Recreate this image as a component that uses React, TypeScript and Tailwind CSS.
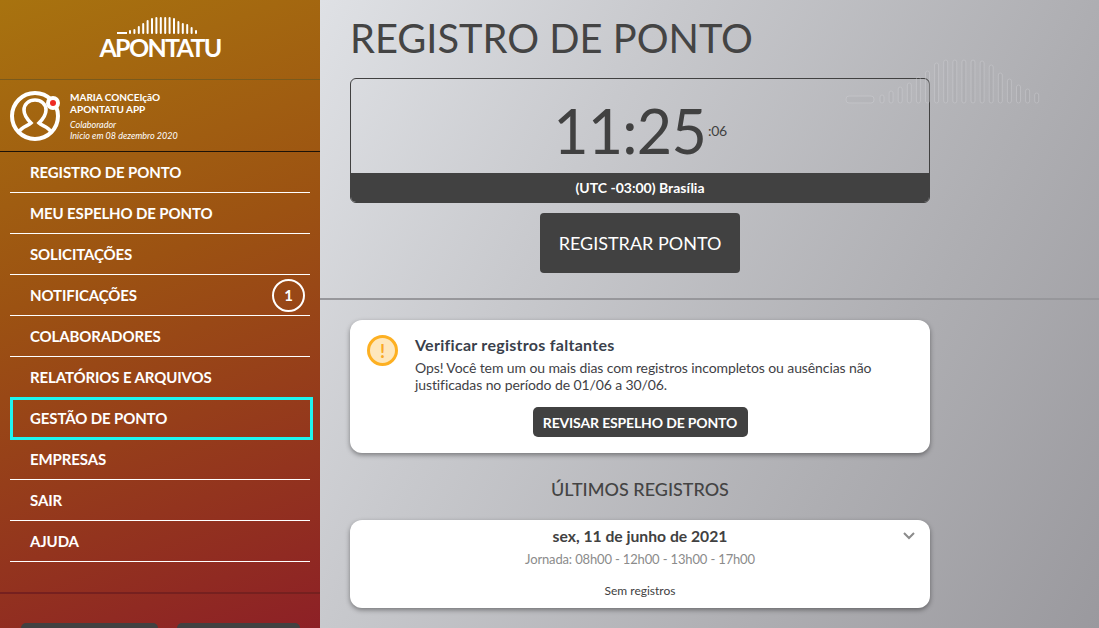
import React from "react";

const menu = [
  "REGISTRO DE PONTO",
  "MEU ESPELHO DE PONTO",
  "SOLICITAÇÕES",
  "NOTIFICAÇÕES",
  "COLABORADORES",
  "RELATÓRIOS E ARQUIVOS",
  "GESTÃO DE PONTO",
  "EMPRESAS",
  "SAIR",
  "AJUDA",
];

const logoBars = [4, 5, 8, 11, 14, 16, 17, 17, 17, 17, 16, 13, 11, 10, 7, 4];
const markBars = [8, 12, 16, 20, 26, 32, 40, 43, 43, 43, 43, 42, 38, 30, 24, 18, 14, 10];

function Logo() {
  return (
    <div className="flex flex-col items-center">
      <svg width="84" height="18" viewBox="0 0 84 18" className="-ml-[2px]">
        <rect x="0" y="15" width="10" height="2" fill="#fff" />
        {logoBars.map((h, i) => (
          <rect key={i} x={12 + i * 4.4} y={17 - h} width="2" height={h} rx="1" fill="#fff" />
        ))}
      </svg>
      <div className="mt-[1px] text-[25px] font-bold leading-[23px] tracking-[-1.7px] text-white">APONTATU</div>
    </div>
  );
}

function Avatar() {
  return (
    <svg width="50" height="50" viewBox="0 0 50 50" className="shrink-0">
      <circle cx="25" cy="25" r="23" fill="none" stroke="#fff" strokeWidth="4" />
      <path
        d="M9 41 C11 36 18 35 21 32 C17 28 14 24 14 19 C14 13 19 9 25 9 C31 9 36 13 36 19 C36 24 33 28 29 32 C32 35 39 36 41 41"
        fill="none"
        stroke="#fff"
        strokeWidth="3.6"
      />
      <circle cx="43" cy="12" r="7" fill="#fff" />
      <circle cx="43" cy="12" r="3" fill="#ee2a24" />
    </svg>
  );
}

function Watermark() {
  return (
    <svg width="200" height="46" viewBox="0 0 200 46" className="absolute left-[845px] top-[59px] opacity-35">
      <rect x="1" y="37" width="28" height="7" rx="3" fill="rgba(0,0,0,0.05)" stroke="#d6d6da" strokeWidth="1" />
      {markBars.map((h, i) => (
        <rect key={i} x={35 + i * 9.1} y={44 - h} width="4" height={h} rx="2" fill="rgba(0,0,0,0.05)" stroke="#d6d6da" strokeWidth="1" />
      ))}
    </svg>
  );
}

export default function App() {
  return (
    <div className="relative flex h-[628px] w-[1099px] overflow-hidden font-['Lato','Noto_Sans',sans-serif]">
      {/* Sidebar */}
      <aside className="flex h-full w-[320px] shrink-0 flex-col overflow-hidden bg-[linear-gradient(160deg,#a8730f_0%,#9c5212_42%,#8d2026_100%)] text-white">
        <div className="flex h-[80px] shrink-0 items-start justify-center border-b border-[#7a5a1c] pt-[17px]">
          <Logo />
        </div>
        <div className="flex h-[72px] shrink-0 items-center gap-[10px] border-b border-[#1c1208] pl-[10px]">
          <Avatar />
          <div className="pt-[1px]">
            <div className="text-[10px] font-bold leading-[12px]">MARIA CONCEIçãO</div>
            <div className="text-[10px] font-bold leading-[12px]">APONTATU APP</div>
            <div className="mt-[4px] text-[9px] italic leading-[11px]">Colaborador</div>
            <div className="text-[9px] italic leading-[11px]">Início em 08 dezembro 2020</div>
          </div>
        </div>
        <nav className="flex shrink-0 flex-col px-[10px]">
          {menu.map((item) => (
            <div
              key={item}
              className={
                item === "GESTÃO DE PONTO"
                  ? "relative -my-[1px] flex h-[43px] w-[303px] shrink-0 items-center border-[3px] border-[#1ff5ef] pl-[17px] text-[15px] font-bold tracking-[-0.12px]"
                  : "flex h-[41px] shrink-0 items-center justify-between border-b border-white pl-[20px] pr-[5px] text-[15px] font-bold tracking-[-0.12px]"
              }
            >
              <span>{item}</span>
              {item === "NOTIFICAÇÕES" && (
                <span className="flex h-[33px] w-[33px] items-center justify-center rounded-full border-2 border-white text-[15px]">1</span>
              )}
            </div>
          ))}
        </nav>
        <div className="mt-[30px] shrink-0 border-t-2 border-[#76201f] pl-[21px] pt-[29px]">
          <div className="flex gap-[19px]">
            <div className="h-[20px] w-[137px] rounded-t-[5px] bg-[#414141]" />
            <div className="h-[20px] w-[123px] rounded-t-[5px] bg-[#414141]" />
          </div>
        </div>
      </aside>

      {/* Main */}
      <main className="min-w-0 flex-1 bg-[linear-gradient(119deg,#dfe1e5_0%,#c8c9cd_31%,#aeaeb2_69%,#9a999e_100%)] text-[#414141]">
        <div className="w-[610px] pl-[30px]">
          <h1 className="pt-[13px] text-[39.8px] font-normal leading-[50px] text-[#444]">REGISTRO DE PONTO</h1>
          <div className="mt-[15px] w-[580px] overflow-hidden rounded-[6px] border border-[#414141]">
            <div className="flex h-[94px] items-center justify-center pt-[8px]">
              <span className="text-[61px] font-normal leading-none tracking-[-0.8px]">11:25</span>
              <span className="ml-[2px] text-[14px] font-normal tracking-[-0.3px]">:06</span>
            </div>
            <div className="flex h-[29px] items-center justify-center bg-[#414141] text-[14px] font-bold text-white">(UTC -03:00) Brasília</div>
          </div>
          <div className="flex w-[580px] justify-center pt-[10px]">
            <button className="h-[60px] w-[200px] rounded-[4px] bg-[#414141] text-[18px] text-white">REGISTRAR PONTO</button>
          </div>
        </div>
        <div className="mt-[25px] h-[2px] bg-[#97979b]" />
        <div className="pl-[30px]">
          <section className="mt-[20px] h-[133px] w-[580px] rounded-[12px] bg-white px-[17px] pt-[15px] shadow-[0_2px_5px_rgba(0,0,0,0.4)]">
            <div className="flex gap-[17px]">
              <div className="flex h-[31px] w-[31px] shrink-0 items-center justify-center rounded-full border-[3px] border-[#fdb022] bg-[#fee7bc] text-[18px] font-bold leading-none text-[#f9a825]">!</div>
              <div className="-mt-[2px]">
                <div className="text-[16px] font-bold leading-[24px] tracking-[0.28px] text-[#3a3f4b]">Verificar registros faltantes</div>
                <div className="mt-[2px] text-[14px] leading-[17px] tracking-[-0.1px] text-[#3f3f46]">
                  Ops! Você tem um ou mais dias com registros incompletos ou ausências não<br />
                  justificadas no período de 01/06 a 30/06.
                </div>
              </div>
            </div>
            <div className="mt-[14px] flex justify-center">
              <button className="h-[30px] w-[215px] rounded-[5px] bg-[#414141] text-[14px] font-bold tracking-[-0.15px] text-white">REVISAR ESPELHO DE PONTO</button>
            </div>
          </section>
          <h2 className="mt-[23px] w-[580px] text-center text-[18px] font-medium leading-[26px] text-[#444]">ÚLTIMOS REGISTROS</h2>
          <section className="relative mt-[18px] h-[88px] w-[580px] rounded-[12px] bg-white pt-[6px] text-center shadow-[0_2px_5px_rgba(0,0,0,0.4)]">
            <div className="text-[15.7px] font-bold leading-[20px] text-[#414141]">sex, 11 de junho de 2021</div>
            <div className="mt-[3px] text-[13px] leading-[20px] tracking-[-0.15px] text-[#8b8b8b]">Jornada: 08h00 - 12h00 - 13h00 - 17h00</div>
            <div className="mt-[14px] text-[12px] leading-[16px] text-[#414141]">Sem registros</div>
            <svg width="14" height="14" viewBox="0 0 14 14" className="absolute right-[14px] top-[9px]">
              <path d="M2 4 L7 9 L12 4" fill="none" stroke="#8b8b8b" strokeWidth="2" />
            </svg>
          </section>
        </div>
      </main>
      <Watermark />
    </div>
  );
}
